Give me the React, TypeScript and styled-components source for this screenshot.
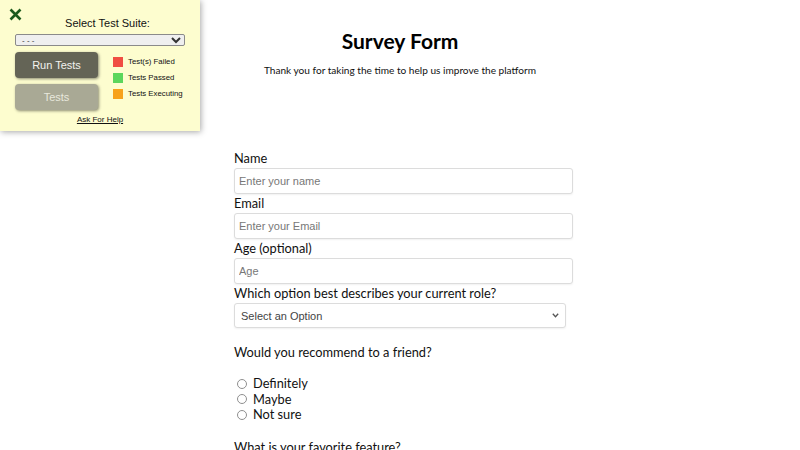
import React from "react";
import styled, { createGlobalStyle } from "styled-components";

const Global = createGlobalStyle`
  html, body { margin: 0; padding: 0; background: #ffffff; }
  body { font-family: Lato, "Noto Sans", sans-serif; color: #111; }
`;

const Page = styled.div`
  width: 800px;
  height: 450px;
  overflow: hidden;
  position: relative;
`;

const TestPanel = styled.div`
  position: absolute;
  left: 0;
  top: 0;
  width: 200px;
  height: 131px;
  background: #fdfdcf;
  box-shadow: 1px 1px 6px rgba(0, 0, 0, 0.35);
  font-family: "Liberation Sans", Arial, sans-serif;
  box-sizing: border-box;
  padding: 16px 15px 0 15px;
  display: flex;
  flex-direction: column;
  z-index: 5;
`;

const CloseIcon = styled.svg`
  position: absolute;
  left: 9px;
  top: 8px;
`;

const SuiteTitle = styled.div`
  text-align: center;
  font-size: 11px;
  color: #111;
  line-height: 14px;
  padding-left: 15px;
`;

const SuiteSelect = styled.select`
  margin-top: 4px;
  width: 170px;
  height: 12px;
  font-size: 8px;
  padding: 0 2px;
  font-family: "Liberation Sans", Arial, sans-serif;
  border: 1px solid #8a8a8a;
  border-radius: 2px;
  background: #efefef;
  color: #333;
  box-sizing: border-box;
  line-height: 10px;
`;

const Controls = styled.div`
  display: flex;
  margin-top: 6px;
  gap: 15px;
`;

const ButtonCol = styled.div`
  display: flex;
  flex-direction: column;
  gap: 6px;
`;

const PanelButton = styled.button<{ $muted?: boolean }>`
  width: 83px;
  height: 26px;
  border: none;
  border-radius: 4px;
  background: ${(p) => (p.$muted ? "#a9a995" : "#646456")};
  color: ${(p) => (p.$muted ? "#e8e8dc" : "#f2f2ee")};
  font-family: "Liberation Sans", Arial, sans-serif;
  font-size: 11px;
  box-shadow: 1px 1px 3px rgba(0, 0, 0, 0.45);
  padding: 0;
`;

const Legend = styled.div`
  display: flex;
  flex-direction: column;
  gap: 6px;
  padding-top: 5px;
`;

const LegendItem = styled.div`
  display: flex;
  align-items: center;
  gap: 5px;
  font-size: 7.8px;
  line-height: 10px;
  color: #111;
  white-space: nowrap;
`;

const Swatch = styled.span<{ $color: string }>`
  flex: none;
  width: 10px;
  height: 10px;
  background: ${(p) => p.$color};
  display: inline-block;
`;

const HelpLink = styled.a`
  margin-top: 5px;
  text-align: center;
  font-size: 8px;
  color: #111;
  text-decoration: underline;
`;

const Header = styled.header`
  padding-top: 26px;
  text-align: center;
`;

const Title = styled.h1`
  margin: 0;
  font-size: 21px;
  font-weight: 700;
  line-height: 30px;
  color: #000;
`;

const Subtitle = styled.p`
  margin: 6px 0 0 0;
  font-size: 10.1px;
  line-height: 16px;
  color: #111;
`;

const Form = styled.form`
  width: 339px;
  margin: 71px auto 0;
  padding-left: 7px;
  display: flex;
  flex-direction: column;
`;

const Label = styled.label<{ $gap?: number }>`
  font-size: 12.8px;
  line-height: 19px;
  color: #111;
  margin-top: ${(p) => p.$gap ?? 0}px;
`;

const TextInput = styled.input`
  box-sizing: border-box;
  width: 339px;
  height: 26px;
  border: 1px solid #dcdcdc;
  border-radius: 3px;
  padding: 0 4px;
  font-family: "Liberation Sans", Arial, sans-serif;
  font-size: 11px;
  box-shadow: 0 1px 2px rgba(0, 0, 0, 0.06);
  &::placeholder { color: #777; }
`;

const SelectWrap = styled.div`
  position: relative;
  width: 332px;
  height: 25px;
`;

const RoleSelect = styled.select`
  appearance: none;
  box-sizing: border-box;
  width: 332px;
  height: 25px;
  border: 1px solid #dcdcdc;
  border-radius: 3px;
  padding: 0 6px;
  font-family: "Liberation Sans", Arial, sans-serif;
  font-size: 11px;
  color: #444;
  background: #fff;
  box-shadow: 0 1px 2px rgba(0, 0, 0, 0.06);
`;

const Chevron = styled.svg`
  position: absolute;
  right: 7px;
  top: 10px;
  pointer-events: none;
`;

const RadioGroup = styled.div`
  display: flex;
  flex-direction: column;
  margin-top: 14px;
`;

const RadioRow = styled.label`
  display: flex;
  align-items: center;
  font-size: 12.8px;
  line-height: 15.5px;
  color: #111;
`;

const Radio = styled.input`
  appearance: none;
  box-sizing: border-box;
  width: 10px;
  height: 10px;
  margin: 0 6px 0 3px;
  border: 1px solid #8f8f8f;
  border-radius: 50%;
  background: #fff;
`;

export default function App() {
  return (
    <Page>
      <Global />
      <TestPanel>
        <CloseIcon width="13" height="13" viewBox="0 0 13 13">
          <path d="M1.5 1.5 L11.5 11.5 M11.5 1.5 L1.5 11.5" stroke="#1c5a1c" strokeWidth="2.6" strokeLinecap="butt" />
        </CloseIcon>
        <SuiteTitle>Select Test Suite:</SuiteTitle>
        <SuiteSelect defaultValue="none">
          <option value="none">- - -</option>
        </SuiteSelect>
        <Controls>
          <ButtonCol>
            <PanelButton type="button">Run Tests</PanelButton>
            <PanelButton type="button" $muted>Tests</PanelButton>
          </ButtonCol>
          <Legend>
            <LegendItem><Swatch $color="#f04e43" />Test(s) Failed</LegendItem>
            <LegendItem><Swatch $color="#5cd65c" />Tests Passed</LegendItem>
            <LegendItem><Swatch $color="#f7a21b" />Tests Executing</LegendItem>
          </Legend>
        </Controls>
        <HelpLink href="#">Ask For Help</HelpLink>
      </TestPanel>

      <Header>
        <Title>Survey Form</Title>
        <Subtitle>Thank you for taking the time to help us improve the platform</Subtitle>
      </Header>

      <Form>
        <Label>Name</Label>
        <TextInput placeholder="Enter your name" />
        <Label>Email</Label>
        <TextInput placeholder="Enter your Email" />
        <Label>Age (optional)</Label>
        <TextInput placeholder="Age" />
        <Label>Which option best describes your current role?</Label>
        <SelectWrap>
          <RoleSelect defaultValue="">
            <option value="">Select an Option</option>
          </RoleSelect>
          <Chevron width="7" height="5" viewBox="0 0 7 5">
            <path d="M0.8 0.8 L3.5 3.8 L6.2 0.8" fill="none" stroke="#555" strokeWidth="1.3" />
          </Chevron>
        </SelectWrap>
        <Label $gap={15}>Would you recommend to a friend?</Label>
        <RadioGroup>
          <RadioRow><Radio type="radio" name="rec" />Definitely</RadioRow>
          <RadioRow><Radio type="radio" name="rec" />Maybe</RadioRow>
          <RadioRow><Radio type="radio" name="rec" />Not sure</RadioRow>
        </RadioGroup>
        <Label $gap={15}>What is your favorite feature?</Label>
      </Form>
    </Page>
  );
}
